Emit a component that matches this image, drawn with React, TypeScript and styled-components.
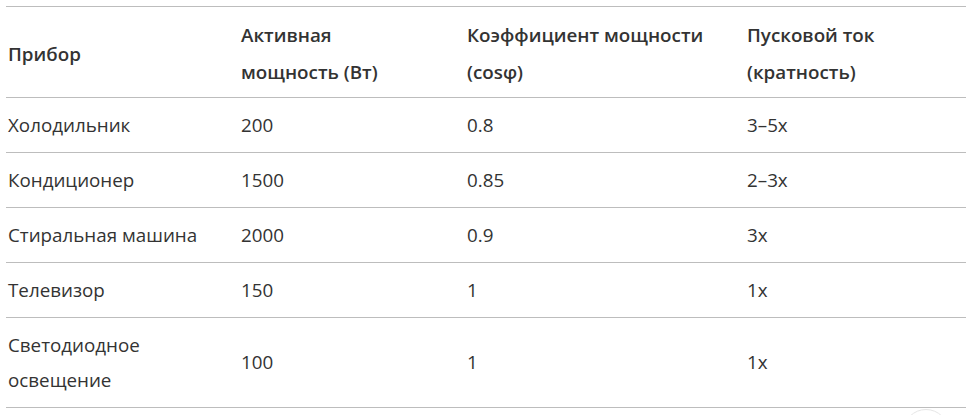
import React from "react";
import styled, { createGlobalStyle } from "styled-components";

const GlobalStyle = createGlobalStyle`
  html, body {
    margin: 0;
    padding: 0;
    background: #fff;
  }
  body {
    font-family: "Open Sans", "Noto Sans", "Liberation Sans", sans-serif;
    color: #333;
  }
`;

const rows = [
  ["Холодильник", "200", "0.8", "3–5x"],
  ["Кондиционер", "1500", "0.85", "2–3x"],
  ["Стиральная машина", "2000", "0.9", "3x"],
  ["Телевизор", "150", "1", "1x"],
  ["Светодиодное освещение", "100", "1", "1x"],
];

// header labels, split where the original wraps them
const headers = [
  ["Прибор"],
  ["Активная", "мощность (Вт)"],
  ["Коэффициент мощности", "(cosφ)"],
  ["Пусковой ток", "(кратность)"],
];

const colWidths = [233, 226, 280, 221];

export default function App() {
  return (
    <>
      <GlobalStyle />
      <Page>
        <Table>
          <colgroup>
            {colWidths.map((w, i) => (
              <col key={i} style={{ width: w }} />
            ))}
          </colgroup>
          <thead>
            <HeadRow>
              {headers.map((h) => (
                <HeadCell key={h[0]}>
                  {h.map((line, i) => (
                    <HeadLine key={i}>{line}</HeadLine>
                  ))}
                </HeadCell>
              ))}
            </HeadRow>
          </thead>
          <tbody>
            {rows.map((r) => (
              <BodyRow key={r[0]}>
                {r.map((c, i) => (
                  <Cell key={i}>{c}</Cell>
                ))}
              </BodyRow>
            ))}
          </tbody>
        </Table>
        <FloatButton />
      </Page>
    </>
  );
}

const Page = styled.div`
  position: relative;
  padding: 6px 0 0 6px;
  height: 409px;
  overflow: hidden;
`;

const Table = styled.table`
  width: 960px;
  table-layout: fixed;
  border-collapse: collapse;
  border-top: 1px solid #bdbdbd;
`;

const HeadRow = styled.tr`
  border-bottom: 1px solid #bdbdbd;
`;

const BodyRow = styled.tr`
  border-bottom: 1px solid #bdbdbd;
`;

const HeadCell = styled.th`
  text-align: left;
  vertical-align: middle;
  font-size: 18.8px;
  font-weight: 600;
  line-height: 37px;
  padding: 10px 2px 6px;
  color: #333;
`;

const HeadLine = styled.span`
  display: block;
`;

const Cell = styled.td`
  text-align: left;
  vertical-align: middle;
  font-size: 18.8px;
  font-weight: 400;
  line-height: 35px;
  padding: 9.5px 2px;
  color: #333;
`;

const FloatButton = styled.div`
  position: absolute;
  left: 903px;
  top: 409px;
  width: 44px;
  height: 44px;
  border-radius: 50%;
  border: 1px solid #e6e6e6;
  background: #fff;
`;
